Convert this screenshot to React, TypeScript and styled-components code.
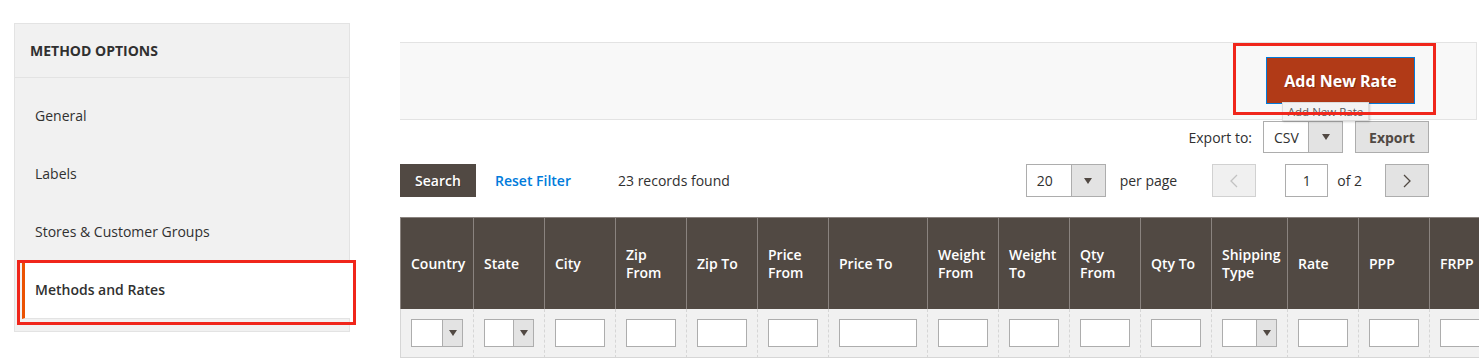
import React from "react";
import styled, { createGlobalStyle } from "styled-components";

const GlobalStyle = createGlobalStyle`
  html, body { margin: 0; padding: 0; background: #fff; }
  body {
    font-family: "Open Sans", "Liberation Sans", Arial, sans-serif;
    font-size: 14px;
    color: #303030;
    -webkit-font-smoothing: antialiased;
  }
  * { box-sizing: border-box; }
`;

const Page = styled.div`
  display: flex;
  align-items: flex-start;
  padding: 23px 0 0 14px;
  height: 359px;
  overflow: hidden;
`;

/* ---------- Sidebar ---------- */
const Sidebar = styled.nav`
  width: 336px;
  flex-shrink: 0;
  background: #f1f1f1;
  border: 1px solid #e3e3e3;
`;

const NavTitle = styled.div`
  height: 54px;
  display: flex;
  align-items: center;
  padding: 0 15px;
  border-bottom: 1px solid #e3e3e3;
  font-weight: 700;
  font-size: 14px;
  text-transform: uppercase;
  color: #303030;
`;

const NavList = styled.ul`
  list-style: none;
  margin: 0;
  padding: 9px 0 12px;
`;

const NavItem = styled.li<{ $active?: boolean }>`
  position: relative;
  margin-left: 7px;
  margin-right: ${(p) => (p.$active ? "-1px" : "0")};
`;

const NavLink = styled.a<{ $active?: boolean }>`
  display: flex;
  align-items: center;
  height: 58px;
  padding-left: 10px;
  border-left: 3px solid ${(p) => (p.$active ? "#eb5202" : "transparent")};
  border-bottom: 1px solid ${(p) => (p.$active ? "#e3e3e3" : "transparent")};
  background: ${(p) => (p.$active ? "#ffffff" : "transparent")};
  font-weight: ${(p) => (p.$active ? 600 : 400)};
  color: #303030;
  text-decoration: none;
  font-size: 14px;
`;

const Highlight = styled.span<{ $t: number; $r: number; $b: number; $l: number }>`
  position: absolute;
  top: ${(p) => p.$t}px;
  right: ${(p) => p.$r}px;
  bottom: ${(p) => p.$b}px;
  left: ${(p) => p.$l}px;
  border: 3px solid #f0261b;
  pointer-events: none;
  z-index: 3;
`;

/* ---------- Main ---------- */
const Main = styled.main`
  width: 1079px;
  margin: 19px 0 0 50px;
  overflow: hidden;
  flex-shrink: 0;
`;

const ActionBar = styled.div`
  height: 78px;
  margin-right: 2px;
  background: #f8f8f8;
  border-top: 1px solid #e3e3e3;
  border-bottom: 1px solid #e3e3e3;
  border-right: 1px solid #e3e3e3;
  display: flex;
  justify-content: flex-end;
  align-items: flex-start;
  padding: 14px 61px 0 0;
`;

const ButtonWrap = styled.div`
  position: relative;
  display: flex;
`;

const PrimaryButton = styled.button`
  width: 149px;
  height: 47px;
  background: #b13a17;
  border: 1px solid #007bdb;
  color: #fff;
  font-family: inherit;
  font-size: 16px;
  font-weight: 700;
  text-shadow: 1px 1px 0 rgba(0, 0, 0, 0.25);
  cursor: pointer;
  padding: 0;
`;

const Tooltip = styled.span`
  position: absolute;
  left: 16px;
  top: 45px;
  height: 19px;
  width: 87px;
  display: flex;
  align-items: center;
  justify-content: center;
  background: #f3f3f3;
  border: 1px solid #dcdcdc;
  box-shadow: 1px 1px 2px rgba(0, 0, 0, 0.18);
  font-size: 11.5px;
  color: #5a5a5a;
  white-space: nowrap;
  z-index: 2;
`;

const Toolbar = styled.div<{ $top: number; $h: number; $end?: boolean }>`
  margin-top: ${(p) => p.$top}px;
  margin-right: 50px;
  height: ${(p) => p.$h}px;
  display: flex;
  align-items: center;
  justify-content: ${(p) => (p.$end ? "flex-end" : "space-between")};
`;

const Group = styled.div`
  display: flex;
  align-items: center;
  height: 100%;
`;

const Label = styled.span<{ $ml?: number; $mr?: number }>`
  margin-left: ${(p) => p.$ml ?? 0}px;
  margin-right: ${(p) => p.$mr ?? 0}px;
  font-size: 14px;
  color: #303030;
  white-space: nowrap;
`;

const FakeSelect = styled.div<{ $w: number; $h: number; $arrow: number; $ml?: number }>`
  width: ${(p) => p.$w}px;
  height: ${(p) => p.$h}px;
  margin-left: ${(p) => p.$ml ?? 0}px;
  display: flex;
  border: 1px solid #adadad;
  background: #fff;
  font-size: 14px;
  color: #303030;
  & > span:first-child {
    flex: 1;
    display: flex;
    align-items: center;
    padding-left: 10px;
  }
  & > span:last-child {
    width: ${(p) => p.$arrow}px;
    background: #e3e3e3;
    border-left: 1px solid #adadad;
    display: flex;
    align-items: center;
    justify-content: center;
  }
`;

const Caret = styled.i`
  width: 0;
  height: 0;
  border-left: 4px solid transparent;
  border-right: 4px solid transparent;
  border-top: 6px solid #514943;
`;

const GrayButton = styled.button<{ $ml?: number }>`
  height: 32px;
  width: 74px;
  margin-left: ${(p) => p.$ml ?? 0}px;
  padding: 0;
  background: #e3e3e3;
  border: 1px solid #adadad;
  color: #514943;
  font-family: inherit;
  font-size: 14px;
  font-weight: 700;
`;

const DarkButton = styled.button`
  height: 33px;
  width: 76px;
  background: #514943;
  border: 1px solid #514943;
  color: #fff;
  font-family: inherit;
  font-size: 14px;
  font-weight: 600;
  text-shadow: 1px 1px 0 rgba(0, 0, 0, 0.2);
  padding: 0;
`;

const LinkButton = styled.a`
  margin-left: 19px;
  color: #007bdb;
  font-weight: 600;
  font-size: 14px;
  text-decoration: none;
`;

const PageButton = styled.button<{ $disabled?: boolean; $w: number; $ml: number }>`
  width: ${(p) => p.$w}px;
  height: 33px;
  margin-left: ${(p) => p.$ml}px;
  display: flex;
  align-items: center;
  justify-content: center;
  padding: 0;
  background: ${(p) => (p.$disabled ? "#f0f0f0" : "#e3e3e3")};
  border: 1px solid ${(p) => (p.$disabled ? "#d1d1d1" : "#adadad")};
  color: ${(p) => (p.$disabled ? "#c2c2c2" : "#514943")};
`;

const PageInput = styled.div`
  width: 43px;
  height: 33px;
  margin-left: 29px;
  border: 1px solid #adadad;
  background: #fff;
  display: flex;
  align-items: center;
  justify-content: center;
  font-size: 14px;
  color: #303030;
`;

/* ---------- Table ---------- */
const TableWrap = styled.div`
  margin-top: 20px;
`;

const Table = styled.table<{ $w: number }>`
  width: ${(p) => p.$w}px;
  border-collapse: separate;
  border-spacing: 0;
  table-layout: fixed;
`;

const Col = styled.col<{ $w: number }>`
  width: ${(p) => p.$w}px;
`;

const Th = styled.th`
  height: 92px;
  padding: 0 10px;
  background: #514943;
  color: #fff;
  font-size: 14px;
  font-weight: 600;
  line-height: 18px;
  text-align: left;
  vertical-align: middle;
  border-left: 1px solid #8a837f;
  border-top: 1px solid #8a837f;
  white-space: normal;
`;

const Td = styled.td<{ $first?: boolean }>`
  padding: 10px 10px 10px;
  background: #f1f1f1;
  border-left: 1px ${(p) => (p.$first ? "solid" : "dashed")} #d6d6d6;
  border-bottom: 1px solid #d6d6d6;
  vertical-align: top;
`;

const FilterInput = styled.div`
  height: 28px;
  width: 100%;
  border: 1px solid #adadad;
  background: #fff;
`;

const FilterSelect = styled.div`
  height: 28px;
  width: 100%;
  border: 1px solid #adadad;
  background: #fff;
  display: flex;
  justify-content: flex-end;
  & > span {
    width: 20px;
    background: #e3e3e3;
    border-left: 1px solid #adadad;
    display: flex;
    align-items: center;
    justify-content: center;
  }
`;

const Chevron = ({ dir }: { dir: "left" | "right" }) => (
  <svg width="8" height="14" viewBox="0 0 8 14">
    <polyline
      points={dir === "left" ? "7,1 1,7 7,13" : "1,1 7,7 1,13"}
      fill="none"
      stroke="currentColor"
      strokeWidth="1.3"
    />
  </svg>
);

const navItems = ["General", "Labels", "Stores & Customer Groups", "Methods and Rates"];

const columns: { label: string; w: number; select?: boolean }[] = [
  { label: "Country", w: 73, select: true },
  { label: "State", w: 71, select: true },
  { label: "City", w: 71 },
  { label: "Zip From", w: 71 },
  { label: "Zip To", w: 71 },
  { label: "Price From", w: 71 },
  { label: "Price To", w: 99 },
  { label: "Weight From", w: 71 },
  { label: "Weight To", w: 71 },
  { label: "Qty From", w: 71 },
  { label: "Qty To", w: 71 },
  { label: "Shipping Type", w: 76, select: true },
  { label: "Rate", w: 71 },
  { label: "PPP", w: 71 },
  { label: "FRPP", w: 71 },
];

const tableWidth = columns.reduce((s, c) => s + c.w, 0);

export default function App() {
  return (
    <>
      <GlobalStyle />
      <Page>
        <Sidebar>
          <NavTitle>Method Options</NavTitle>
          <NavList>
            {navItems.map((item, i) => {
              const active = i === navItems.length - 1;
              return (
                <NavItem key={item} $active={active}>
                  <NavLink $active={active}>{item}</NavLink>
                  {active && <Highlight $t={-1} $r={-6} $b={-6} $l={-5} />}
                </NavItem>
              );
            })}
          </NavList>
        </Sidebar>

        <Main>
          <ActionBar>
            <ButtonWrap>
              <PrimaryButton>Add New Rate</PrimaryButton>
              <Tooltip>Add New Rate</Tooltip>
              <Highlight $t={-14} $r={-21} $b={-11} $l={-33} />
            </ButtonWrap>
          </ActionBar>

          <Toolbar $top={1} $h={32} $end>
            <Label>Export to:</Label>
            <FakeSelect $w={80} $h={32} $arrow={34} $ml={11}>
              <span>CSV</span>
              <span>
                <Caret />
              </span>
            </FakeSelect>
            <GrayButton $ml={12}>Export</GrayButton>
          </Toolbar>

          <Toolbar $top={11} $h={33}>
            <Group>
              <DarkButton>Search</DarkButton>
              <LinkButton>Reset Filter</LinkButton>
              <Label $ml={47}>23 records found</Label>
            </Group>
            <Group>
              <FakeSelect $w={80} $h={33} $arrow={34}>
                <span>20</span>
                <span>
                  <Caret />
                </span>
              </FakeSelect>
              <Label $ml={14}>per page</Label>
              <PageButton $disabled $w={44} $ml={35}>
                <Chevron dir="left" />
              </PageButton>
              <PageInput>1</PageInput>
              <Label $ml={9}>of 2</Label>
              <PageButton $w={44} $ml={23}>
                <Chevron dir="right" />
              </PageButton>
            </Group>
          </Toolbar>

          <TableWrap>
            <Table $w={tableWidth}>
              <colgroup>
                {columns.map((c) => (
                  <Col key={c.label} $w={c.w} />
                ))}
              </colgroup>
              <thead>
                <tr>
                  {columns.map((c) => (
                    <Th key={c.label}>{c.label}</Th>
                  ))}
                </tr>
              </thead>
              <tbody>
                <tr>
                  {columns.map((c, i) => (
                    <Td key={c.label} $first={i === 0}>
                      {c.select ? (
                        <FilterSelect>
                          <span>
                            <Caret />
                          </span>
                        </FilterSelect>
                      ) : (
                        <FilterInput />
                      )}
                    </Td>
                  ))}
                </tr>
              </tbody>
            </Table>
          </TableWrap>
        </Main>
      </Page>
    </>
  );
}
